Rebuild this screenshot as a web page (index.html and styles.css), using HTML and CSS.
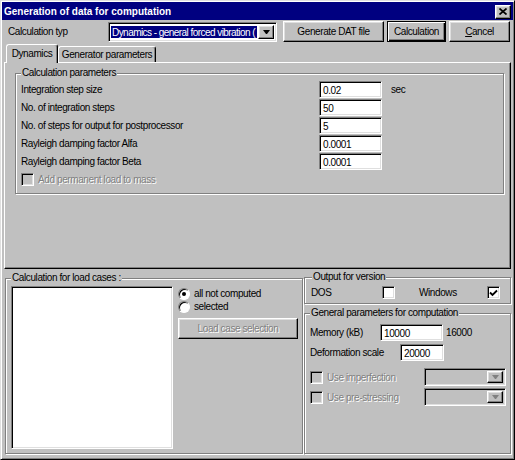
FILE: index.html
```html
<!DOCTYPE html>
<html>
<head>
	<title>Generation of data for computation</title>
	<link rel="stylesheet" href="styles.css">
</head>
<body>
	<div class="window">
		<div class="titlebar">
			<span class="title">Generation of data for computation</span>
			<span class="close">
				<svg width="8" height="7" viewBox="0 0 8 7"><path d="M0.5 0.5L7.5 6.5M7.5 0.5L0.5 6.5" stroke="#000" stroke-width="1.7" fill="none"/></svg>
			</span>
		</div>

		<div class="toolbar">
			<span class="lbl-typ">Calculation typ</span>
			<div class="combo combo-typ">
				<span class="combo-value"><span class="sel">Dynamics - general forced vibration (</span></span>
				<span class="combo-btn"><svg width="7" height="4" viewBox="0 0 7 4"><path d="M0 0h7L4 4H3z" fill="#000"/></svg></span>
			</div>
			<div class="btn btn-gen">Generate DAT file</div>
			<div class="btn btn-default btn-calc">Calculation</div>
			<div class="btn btn-cancel"><u>C</u>ancel</div>
		</div>

		<div class="tabs">
			<div class="tab tab--active">Dynamics</div>
			<div class="tab">Generator parameters</div>
		</div>
		<div class="tabpanel">
			<fieldset class="group group-calc">
				<legend>Calculation parameters</legend>
				<div class="row"><span class="lbl">Integration step size</span><span class="edit">0.02</span><span class="unit">sec</span></div>
				<div class="row"><span class="lbl">No. of integration steps</span><span class="edit">50</span></div>
				<div class="row"><span class="lbl">No. of steps for output for postprocessor</span><span class="edit">5</span></div>
				<div class="row"><span class="lbl">Rayleigh damping factor Alfa</span><span class="edit">0.0001</span></div>
				<div class="row"><span class="lbl">Rayleigh damping factor Beta</span><span class="edit">0.0001</span></div>
				<div class="check check-perm disabled"><span class="box box--off"></span><span class="check-text">Add permanent load to mass</span></div>
			</fieldset>
		</div>

		<div class="bottom">
			<fieldset class="group group-load">
				<legend>Calculation for load cases :</legend>
				<div class="load-body">
					<div class="listbox"></div>
					<div class="load-side">
						<div class="radio-row"><span class="radio"><span class="dot"></span></span>all not computed</div>
						<div class="radio-row"><span class="radio"></span>selected</div>
						<div class="btn btn-sel disabled">Load case selection</div>
					</div>
				</div>
			</fieldset>

			<div class="right">
				<fieldset class="group group-out">
					<legend>Output for version</legend>
					<div class="out-row">
						<span class="out-lbl">DOS</span>
						<span class="box"></span>
						<span class="out-lbl out-win">Windows</span>
						<span class="box"><svg width="9" height="8" viewBox="0 0 9 8"><path d="M1 3.5L3.5 6L8 1.5" stroke="#000" stroke-width="1.8" fill="none"/></svg></span>
					</div>
				</fieldset>

				<fieldset class="group group-gen">
					<legend>General parameters for computation</legend>
					<div class="gen-row">
						<span class="gen-lbl gen-lbl--mem">Memory (kB)</span>
						<span class="edit">10000</span>
						<span class="gen-max">16000</span>
					</div>
					<div class="gen-row gen-row--scale">
						<span class="gen-lbl gen-lbl--scale">Deformation scale</span>
						<span class="edit edit--short">20000</span>
					</div>
					<div class="opt-row disabled">
						<span class="box box--off"></span>
						<span class="check-text">Use imperfection</span>
						<div class="combo combo-off">
							<span class="combo-value"></span>
							<span class="combo-btn"><svg width="7" height="4" viewBox="0 0 7 4"><path d="M0 0h7L4 4H3z" fill="#808080"/></svg></span>
						</div>
					</div>
					<div class="opt-row disabled">
						<span class="box box--off"></span>
						<span class="check-text">Use pre-stressing</span>
						<div class="combo combo-off">
							<span class="combo-value"></span>
							<span class="combo-btn"><svg width="7" height="4" viewBox="0 0 7 4"><path d="M0 0h7L4 4H3z" fill="#808080"/></svg></span>
						</div>
					</div>
				</fieldset>
			</div>
		</div>
	</div>
</body>
</html>
```

FILE: styles.css
```css
* {
	box-sizing: border-box;
}

body {
	margin: 0;
	background: #c0c0c0;
	font-family: "Liberation Sans", Arial, sans-serif;
	font-size: 10px;
	letter-spacing: -0.4px;
	color: #000;
}

/* raised / sunken win95 edges */
.btn,
.combo-btn,
.close {
	background: #c0c0c0;
	border: 1px solid;
	border-color: #fff #000 #000 #fff;
	box-shadow: inset -1px -1px #808080, inset 1px 1px #dfdfdf;
}

.edit,
.combo,
.listbox,
.box {
	background: #fff;
	border: 1px solid;
	border-color: #808080 #fff #fff #808080;
	box-shadow: inset 1px 1px #000, inset -1px -1px #dfdfdf;
}

.disabled {
	color: #808080;
	text-shadow: 1px 1px 0 #fff;
}

.window {
	width: 515px;
	height: 460px;
	padding: 1px;
	border: 1px solid;
	border-color: #dfdfdf #000 #000 #dfdfdf;
	box-shadow: inset 1px 1px #fff, inset -1px -1px #808080;
	display: flex;
	flex-direction: column;
}

.titlebar {
	height: 18px;
	flex-shrink: 0;
	background: #000080;
	color: #fff;
	font-weight: bold;
	letter-spacing: 0;
	display: flex;
	align-items: center;
	justify-content: space-between;
	padding: 0 2px 0 2px;
}

.close {
	width: 16px;
	height: 14px;
	display: flex;
	align-items: center;
	justify-content: center;
	margin-top: 1px;
}

.toolbar {
	height: 21px;
	margin-top: 1px;
	display: flex;
	align-items: center;
	padding-left: 6px;
	flex-shrink: 0;
}

.lbl-typ {
	width: 100px;
}

.combo {
	display: flex;
	padding: 2px;
}

.combo-typ {
	width: 169px;
	height: 20px;
}

.combo-value {
	flex: 1;
	min-width: 0;
	overflow: hidden;
	white-space: nowrap;
	padding: 1px 1px 1px 0;
}

.sel {
	display: block;
	background: #000080;
	color: #fff;
	height: 100%;
	line-height: 14px;
	padding-left: 1px;
	letter-spacing: -0.55px;
}

.combo-btn {
	width: 16px;
	display: flex;
	align-items: center;
	justify-content: center;
}

.combo-btn svg {
	display: block;
}

.btn {
	height: 21px;
	display: flex;
	align-items: center;
	justify-content: center;
	white-space: nowrap;
}

.btn-gen {
	width: 101px;
	margin-left: 6px;
}

.btn-default {
	border-color: #000;
	box-shadow: inset 1px 1px #fff, inset -1px -1px #000, inset -2px -2px #808080;
}

.btn-calc {
	width: 59px;
	margin-left: 3px;
}

.btn-cancel {
	width: 61px;
	margin-left: 3px;
}

/* tabs */
.tabs {
	height: 20px;
	flex-shrink: 0;
	display: flex;
	align-items: flex-end;
	padding-left: 4px;
}

.tab {
	height: 16px;
	border: 1px solid;
	border-color: #fff #000 transparent #fff;
	border-bottom: none;
	border-radius: 3px 3px 0 0;
	box-shadow: inset -1px 0 #808080;
	display: flex;
	align-items: center;
	justify-content: center;
	background: #c0c0c0;
	width: 98px;
}

.tab--active {
	height: 19px;
	width: 52px;
	margin-bottom: -1px;
	position: relative;
	z-index: 1;
	padding-bottom: 2px;
}

.tabpanel {
	margin-left: 2px;
	width: 507px;
	height: 207px;
	flex-shrink: 0;
	border: 1px solid;
	border-color: #fff #000 #000 #fff;
	box-shadow: inset -1px -1px #808080;
	display: flex;
	flex-direction: column;
}

/* group boxes */
.group {
	margin: 0;
	min-width: 0;
	border: 1px solid #808080;
	box-shadow: inset 1px 1px #fff, 1px 1px #fff;
}

.group legend {
	padding: 0 1px;
	line-height: 12px;
	background: #c0c0c0;
}

.group-calc {
	margin: 4px 6px 0 10px;
	padding: 1px 5px 7px 5px;
}

.row {
	display: flex;
	align-items: center;
	height: 18px;
}

.lbl {
	width: 298px;
}

.edit {
	width: 63px;
	height: 17px;
	padding: 2px 0 0 3px;
	line-height: 13px;
}

.unit {
	margin-left: 9px;
}

.check {
	display: flex;
	align-items: center;
	margin-top: 3px;
	height: 13px;
}

.box {
	width: 13px;
	height: 13px;
	flex-shrink: 0;
	display: flex;
	align-items: center;
	justify-content: center;
}

.box--off {
	background: #c0c0c0;
}

.check-text {
	margin-left: 4px;
}

/* bottom area */
.bottom {
	display: flex;
	margin-top: 3px;
}

.group-load {
	margin-left: 3px;
	width: 298px;
	height: 182px;
	padding: 2px 4px 4px 5px;
}

.load-body {
	display: flex;
}

.listbox {
	width: 163px;
	height: 163px;
}

.load-side {
	margin-left: 5px;
	display: flex;
	flex-direction: column;
	flex: 1;
}

.radio-row {
	display: flex;
	align-items: center;
	height: 13px;
}

.radio-row:first-child {
	margin-top: 1px;
}

.radio {
	width: 12px;
	height: 12px;
	border-radius: 50%;
	background: #fff;
	border: 1px solid;
	border-color: #808080 #fff #fff #808080;
	box-shadow: inset 1px 1px #000;
	display: flex;
	align-items: center;
	justify-content: center;
	margin-right: 4px;
}

.dot {
	width: 4px;
	height: 4px;
	border-radius: 50%;
	background: #000;
}

.btn-sel {
	width: 120px;
	margin-top: 5px;
}

.right {
	margin-left: 1px;
	width: 207px;
	display: flex;
	flex-direction: column;
	margin-top: -1px;
}

.group-out {
	height: 33px;
	padding: 0 10px 0 7px;
}

.out-row {
	display: flex;
	align-items: center;
	height: 19px;
}

.out-lbl {
	width: 71px;
	margin-left: -1px;
}

.out-win {
	width: 68px;
	margin-left: 24px;
}

.group-gen {
	margin-top: 3px;
	height: 147px;
	padding: 5px 4px 0 5px;
}

.gen-row {
	display: flex;
	align-items: center;
	height: 17px;
}

.gen-row--scale {
	margin-top: 3px;
}

.gen-lbl--mem {
	width: 70px;
}

.gen-lbl--scale {
	width: 90px;
}

.edit--short {
	width: 44px;
}

.gen-max {
	margin-left: 3px;
}

.opt-row {
	display: flex;
	align-items: center;
	height: 18px;
	margin-top: 2px;
}

.gen-row--scale + .opt-row {
	margin-top: 7px;
}

.combo-off {
	margin-left: auto;
	width: 82px;
	height: 18px;
	background: #c0c0c0;
}
```
